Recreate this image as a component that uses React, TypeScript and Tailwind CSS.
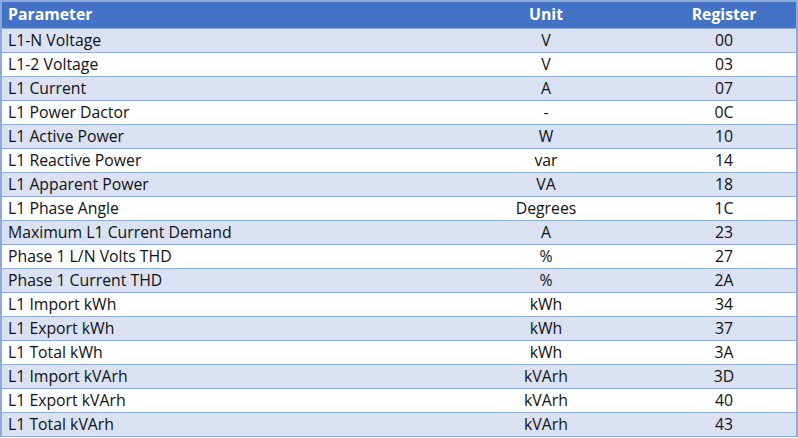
import React from "react";

const rows: [string, string, string][] = [
  ["L1-N Voltage", "V", "00"],
  ["L1-2 Voltage", "V", "03"],
  ["L1 Current", "A", "07"],
  ["L1 Power Dactor", "-", "0C"],
  ["L1 Active Power", "W", "10"],
  ["L1 Reactive Power", "var", "14"],
  ["L1 Apparent Power", "VA", "18"],
  ["L1 Phase Angle", "Degrees", "1C"],
  ["Maximum L1 Current Demand", "A", "23"],
  ["Phase 1 L/N Volts THD", "%", "27"],
  ["Phase 1 Current THD", "%", "2A"],
  ["L1 Import kWh", "kWh", "34"],
  ["L1 Export kWh", "kWh", "37"],
  ["L1 Total kWh", "kWh", "3A"],
  ["L1 Import kVArh", "kVArh", "3D"],
  ["L1 Export kVArh", "kVArh", "40"],
  ["L1 Total kVArh", "kVArh", "43"],
];

export default function App() {
  return (
    <div
      className="w-[798px] h-[438px] bg-white"
      style={{ fontFamily: '"Open Sans", sans-serif' }}
    >
      <div className="w-[798px] h-[437px] border-2 border-[#8eaadb] flex flex-col text-[15.8px] text-[#111]">
        <div className="flex h-[26px] shrink-0 items-center bg-[#4472c4] text-white font-bold">
          <div className="w-[438px] pl-[6px]">Parameter</div>
          <div className="w-[212px] text-center">Unit</div>
          <div className="flex-1 text-center">Register</div>
        </div>
        {rows.map((r, i) => (
          <div
            key={i}
            className={`flex h-[24px] shrink-0 items-center border-t border-[#8eaadb] ${
              i % 2 === 0 ? "bg-[#d9e1f2]" : "bg-white"
            }`}
          >
            <div className="w-[438px] pl-[6px]">{r[0]}</div>
            <div className="w-[212px] text-center">{r[1]}</div>
            <div className="flex-1 text-center">{r[2]}</div>
          </div>
        ))}
      </div>
    </div>
  );
}
